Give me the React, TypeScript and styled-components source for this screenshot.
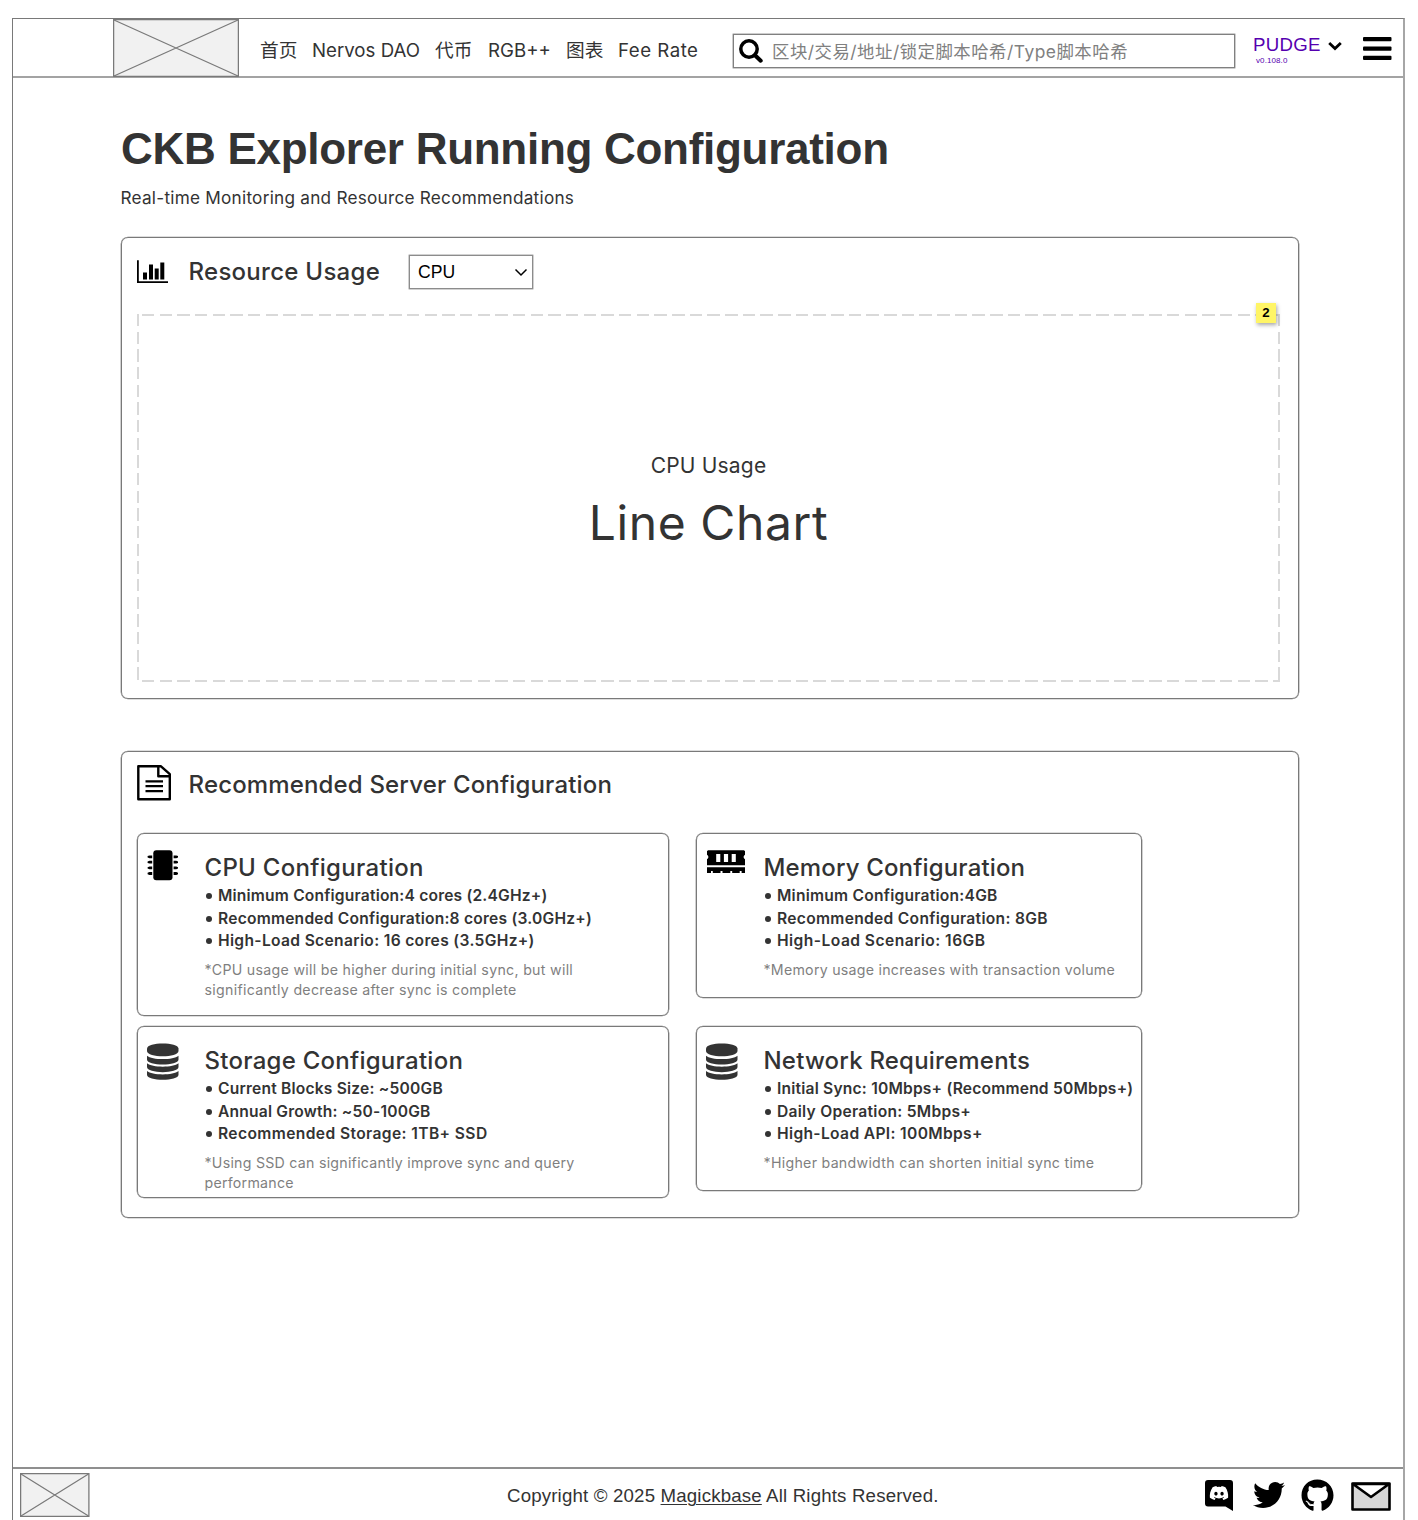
import React from "react";
import styled, { createGlobalStyle } from "styled-components";
import { FaTwitter, FaGithub, FaDiscord } from "react-icons/fa";

const ui = `Inter, "Noto Sans CJK SC", sans-serif`;
const arial = `"Liberation Sans", Arial, sans-serif`;
const line = "#797979";

const GlobalStyle = createGlobalStyle`
  *, *::before, *::after { box-sizing: border-box; }
  html, body { margin: 0; background: #fff; overflow: hidden; }
  body { font-family: ${ui}; color: #333; }
  h1, h2, h3, p, ul { margin: 0; padding: 0; }
  svg { display: block; flex: none; }
`;

const Frame = styled.div`
  display: flex;
  flex-direction: column;
  width: 1393px;
  height: 1502px;
  margin: 18px 0 0 12px;
  border: 1px solid ${line};
  border-right: 2px solid #a6a6a6;
  border-bottom: 0;
  overflow: hidden;
`;

const Header = styled.header`
  display: flex;
  flex: none;
  height: 59px;
  padding-left: 100px;
  border-bottom: 2px solid #a3a3a3;
`;

const Nav = styled.nav`
  display: grid;
  grid-template-columns: 52px 123px 53px 78px 52px 115px;
  align-items: center;
  margin-left: 21px;
  padding-top: 4px;
  font-size: 18.67px;
`;

const NavItem = styled.span<{ $cjk?: boolean; $track?: number }>`
  padding-top: ${(p) => (p.$cjk ? 0 : 2)}px;
  padding-bottom: ${(p) => (p.$cjk ? 2 : 0)}px;
  letter-spacing: ${(p) => p.$track ?? 0}px;
  white-space: nowrap;
`;

const SearchBox = styled.div`
  display: flex;
  align-items: center;
  width: 502px;
  height: 34px;
  margin-top: 15px;
  padding-left: 5px;
  border: 1px solid #808080;
  box-shadow: 0 0 0 0.4px #808080;
  color: #808080;
  gap: 9px;
`;

const SearchText = styled.span`
  padding-bottom: 2px;
  font-size: 17.4px;
  letter-spacing: 0.5px;
  white-space: nowrap;
`;

const Network = styled.div`
  width: 75px;
  padding-top: 15px;
  margin-left: 18px;
  font-family: ${arial};
  color: #5500b0;
`;

const NetworkName = styled.div`
  font-size: 18.67px;
  line-height: 22px;
  letter-spacing: 0.25px;
`;

const NetworkVersion = styled.div`
  padding-left: 3px;
  font-size: 8px;
  line-height: 9px;
  letter-spacing: 0.1px;
`;

const HeaderIcon = styled.span<{ $top: number; $left: number }>`
  margin: ${(p) => p.$top}px 0 0 ${(p) => p.$left}px;
`;

const Main = styled.main`
  flex: 1;
  padding: 45px 0 0 108px;
`;

const PageTitle = styled.h1`
  font: 700 44px/52px ${arial};
  letter-spacing: -0.28px;
  white-space: nowrap;
`;

const Subtitle = styled.p`
  margin: 10px 0 0 -0.5px;
  font-size: 17.2px;
  line-height: 26px;
  letter-spacing: 0.24px;
  white-space: nowrap;
`;

const Panel = styled.section<{ $height: number; $top: number }>`
  width: 1178px;
  height: ${(p) => p.$height}px;
  margin-top: ${(p) => p.$top}px;
  padding: 0 15px;
  border: 1px solid ${line};
  border-radius: 7px;
  box-shadow: 0 0 0 0.35px ${line};
`;

const PanelHead = styled.div<{ $height: number }>`
  display: flex;
  align-items: center;
  height: ${(p) => p.$height}px;
`;

const PanelTitle = styled.h2<{ $gap: number; $track: number }>`
  margin-left: ${(p) => p.$gap}px;
  font-size: 24px;
  font-weight: 500;
  line-height: 32px;
  letter-spacing: ${(p) => p.$track}px;
  white-space: nowrap;
`;

const Select = styled.div`
  display: flex;
  align-items: center;
  justify-content: space-between;
  width: 124px;
  height: 34px;
  margin: 1px 0 0 29px;
  padding: 0 4px 0 8px;
  border: 1px solid #8c8c8c;
  box-shadow: 0 0 0 0.4px #8c8c8c;
  font: 17.6px ${arial};
  color: #000;
`;

const dashX = "repeating-linear-gradient(90deg, #d9d9d9 0 12.4px, transparent 12.4px 17.67px)";
const dashY = "repeating-linear-gradient(180deg, #d9d9d9 0 12.4px, transparent 12.4px 17.67px)";

const ChartArea = styled.div`
  position: relative;
  display: flex;
  flex-direction: column;
  align-items: center;
  width: 1143px;
  height: 368px;
  margin-top: 9px;
  padding-top: 136px;
  background:
    ${dashX} 4.5px 0 / calc(100% - 5px) 2px no-repeat,
    ${dashX} 4.5px 100% / calc(100% - 5px) 2px no-repeat,
    ${dashY} 0 0 / 2px 100% no-repeat,
    ${dashY} 100% 0 / 2px 100% no-repeat;
`;

const ChartName = styled.div`
  font-size: 21px;
  line-height: 32px;
  letter-spacing: 0.2px;
`;

const ChartKind = styled.div`
  margin-top: 5px;
  font-size: 48px;
  line-height: 72px;
  letter-spacing: 0.6px;
`;

const NoteBadge = styled.span`
  position: absolute;
  top: -11px;
  right: 4px;
  width: 20px;
  height: 20px;
  background: #fff566;
  box-shadow: 1px 2px 4px rgba(0, 0, 0, 0.35);
  color: #000;
  font: 700 13.3px/19px ${arial};
  text-align: center;
`;

const CardGrid = styled.div`
  display: grid;
  grid-template-columns: 532px 446px;
  grid-template-rows: 193px 172px;
  column-gap: 27px;
  align-items: start;
  margin-top: 16px;
`;

const Card = styled.article<{ $height: number }>`
  display: grid;
  grid-template-columns: 57.5px 1fr;
  height: ${(p) => p.$height}px;
  padding: 16px 0 0 9px;
  border: 1px solid ${line};
  border-radius: 7px;
  box-shadow: 0 0 0 0.35px ${line};
`;

const CardTitle = styled.h3<{ $track: number }>`
  padding-top: 1px;
  font-size: 24px;
  font-weight: 500;
  line-height: 34px;
  letter-spacing: ${(p) => p.$track}px;
  white-space: nowrap;
`;

const Specs = styled.ul`
  list-style: none;
  font-size: 15.6px;
  font-weight: 600;
  line-height: 22.6px;
  white-space: nowrap;
`;

const Spec = styled.li<{ $track: number }>`
  display: flex;
  align-items: center;
  letter-spacing: ${(p) => p.$track}px;

  &::before {
    content: "";
    width: 6px;
    height: 6px;
    margin: 0 6.5px 0 1px;
    border-radius: 50%;
    background: #333;
  }
`;

const Footnote = styled.p<{ $track: number }>`
  width: 400px;
  margin-top: 7px;
  color: #7f7f7f;
  font-size: 14.2px;
  line-height: 20px;
  letter-spacing: ${(p) => p.$track}px;
  white-space: pre-line;
`;

const Footer = styled.footer`
  display: grid;
  grid-template-columns: 487px 1fr auto;
  flex: none;
  height: 53px;
  padding: 4px 12px 0 7px;
  border-top: 2px solid #8f8f8f;
`;

const Copyright = styled.p`
  padding-top: 11px;
  font: 18.67px/24px ${arial};
  letter-spacing: 0.17px;
  white-space: nowrap;
`;

const Link = styled.a`
  text-decoration: underline;
  text-underline-offset: 2px;
  text-decoration-thickness: 1px;
`;

const Socials = styled.div`
  display: flex;
  align-items: center;
  height: 44px;
  color: #000;
`;

const SocialSlot = styled.span<{ $left: number; $drop?: number }>`
  display: flex;
  margin-left: ${(p) => p.$left}px;
  padding-top: ${(p) => p.$drop ?? 0}px;
`;

function Placeholder({ width, height }: { width: number; height: number }) {
  return (
    <svg width={width} height={height}>
      <rect x=".6" y=".6" width={width - 1.2} height={height - 1.2} fill="#f1f1f1" stroke={line} strokeWidth="1.3" />
      <path d={`M1 1L${width - 1} ${height - 1}M1 ${height - 1}L${width - 1} 1`} stroke={line} strokeWidth="1.2" />
    </svg>
  );
}

const SearchIcon = () => (
  <svg width="24" height="24" viewBox="0 0 24 24" fill="none" stroke="#000">
    <circle cx="10" cy="10" r="8.2" strokeWidth="3.5" />
    <path d="M16 16.2L21.7 21.7" strokeWidth="4" strokeLinecap="round" />
  </svg>
);

const ChartIcon = () => (
  <svg width="32" height="24" viewBox="0 0 32 24" fill="#000">
    <path d="M0 .3h1.8v21H31V23.100H0zM6 12.500h4V19.500h-4zM12 4.500h4V19.500h-4zM17.700 8.500h4V19.500h-4zM23.300 2.400h4V19.500h-4z" />
  </svg>
);

const DocIcon = () => (
  <svg width="35" height="40" viewBox="0 0 35 40" fill="none" stroke="#000" strokeWidth="2.400" strokeLinejoin="round">
    <path d="M1.300 1.300H24L32.800 9.200V34.200H1.300z" />
    <path d="M21.300 1.300V11.300H32.800" />
    <path d="M8.500 16.300H26M8.500 21.200H26M8.500 26.200H26" strokeWidth="2.200" />
  </svg>
);

const CpuIcon = () => (
  <svg width="32" height="32" viewBox="0 1 32 32" fill="#000">
    <rect x="6.300" y="1.200" width="19.200" height="30" rx="3" />
    {[7.900, 13.300, 19, 24.600].map((y) => (
      <path
        key={y}
        d={`M5.200 ${y - 1.500}H2.500L0.600 ${y - 0.800}V${y + 0.600}L2.500 ${y + 1.300}H5.200zM26.600 ${y - 1.500}H29.300L31 ${y - 0.800}V${y + 0.600}L29.300 ${y + 1.300}H26.600z`}
      />
    ))}
  </svg>
);

const MemoryIcon = () => (
  <svg width="39" height="24" viewBox="-1 0 39 24" fill="#000">
    <path
      fillRule="evenodd"
      d="M1 .3H37L38 1.300V4.800A2.500 2.500 0 0 0 38 9.300V15.200H0V9.300A2.500 2.500 0 0 0 0 4.800V1.300zM9.200 4V12H13.300V4zM16.900 4V12H21.100V4zM24.700 4V12H28.800V4z"
    />
    <path d="M0 17.300H38V23H34.600V21H32.700V23H25.200V21H23.300V23H15.500V21H13.500V23H5.800V21H4V23H0z" />
  </svg>
);

const DatabaseIcon = () => (
  <svg width="31.500" height="38" viewBox="0 0 32 38" preserveAspectRatio="none" fill="#333">
    <path d="M0 5.500C0-1.300 32-1.300 32 5.500V8C32 15 0 15 0 8z" />
    {[12.700, 20.300, 28].map((y) => (
      <path key={y} d={`M0 ${y}C5 ${y + 4.500} 27 ${y + 4.500} 32 ${y}V${y + 3.800}C32 ${y + 10.500} 0 ${y + 10.500} 0 ${y + 3.800}z`} />
    ))}
  </svg>
);

const DiscordIcon = () => (
  <svg width="28" height="31" viewBox="0 0 28 31">
    <path d="M3 0H25A3 3 0 0 1 28 3V31L20.500 26.500H3A3 3 0 0 1 0 23.500V3A3 3 0 0 1 3 0z" fill="#000" />
    <FaDiscord x={4} y={3} size={20} color="#fff" />
  </svg>
);

const MailIcon = () => (
  <svg width="40" height="29" viewBox="0 0 40 29" stroke="#000" strokeWidth="2.600" strokeLinejoin="round">
    <rect x="1.500" y="1.500" width="37" height="26" fill="#d7d7d7" />
    <path d="M2 2L20 15L38 2z" fill="#fff" />
  </svg>
);

interface CardData {
  title: string;
  track: number;
  height: number;
  icon: React.ReactNode;
  specs: [text: string, track: number][];
  note: string;
  noteTrack: number;
}

const cards: CardData[] = [
  {
    title: "CPU Configuration",
    track: 0.3,
    height: 183,
    icon: <CpuIcon />,
    specs: [
      ["Minimum Configuration:4 cores (2.4GHz+)", 0.19],
      ["Recommended Configuration:8 cores (3.0GHz+)", 0.22],
      ["High-Load Scenario: 16 cores (3.5GHz+)", 0.33],
    ],
    note: "*CPU usage will be higher during initial sync, but will\nsignificantly decrease after sync is complete",
    noteTrack: 0.29,
  },
  {
    title: "Memory Configuration",
    track: 0.15,
    height: 165,
    icon: <MemoryIcon />,
    specs: [
      ["Minimum Configuration:4GB", 0.24],
      ["Recommended Configuration: 8GB", 0.3],
      ["High-Load Scenario: 16GB", 0.45],
    ],
    note: "*Memory usage increases with transaction volume",
    noteTrack: 0.25,
  },
  {
    title: "Storage Configuration",
    track: 0.26,
    height: 172,
    icon: <DatabaseIcon />,
    specs: [
      ["Current Blocks Size: ~500GB", 0.2],
      ["Annual Growth: ~50-100GB", 0.2],
      ["Recommended Storage: 1TB+ SSD", 0.39],
    ],
    note: "*Using SSD can significantly improve sync and query\nperformance",
    noteTrack: 0.25,
  },
  {
    title: "Network Requirements",
    track: 0.2,
    height: 165,
    icon: <DatabaseIcon />,
    specs: [
      ["Initial Sync: 10Mbps+ (Recommend 50Mbps+)", 0.2],
      ["Daily Operation: 5Mbps+", 0.27],
      ["High-Load API: 100Mbps+", 0.34],
    ],
    note: "*Higher bandwidth can shorten initial sync time",
    noteTrack: 0.28,
  },
];

export default function App() {
  return (
    <>
      <GlobalStyle />
      <Frame>
        <Header>
          <Placeholder width={126} height={58} />
          <Nav>
            <NavItem $cjk>首页</NavItem>
            <NavItem>Nervos DAO</NavItem>
            <NavItem $cjk>代币</NavItem>
            <NavItem>RGB++</NavItem>
            <NavItem $cjk>图表</NavItem>
            <NavItem $track={0.5}>Fee Rate</NavItem>
          </Nav>
          <SearchBox>
            <SearchIcon />
            <SearchText>区块/交易/地址/锁定脚本哈希/Type脚本哈希</SearchText>
          </SearchBox>
          <Network>
            <NetworkName>PUDGE</NetworkName>
            <NetworkVersion>v0.108.0</NetworkVersion>
          </Network>
          <HeaderIcon $top={22} $left={0}>
            <svg width="14" height="10" viewBox="0 0 14 10" fill="none" stroke="#000" strokeWidth="2.800">
              <path d="M1.200 2L7 7.500L12.800 2" />
            </svg>
          </HeaderIcon>
          <HeaderIcon $top={18} $left={20.5}>
            <svg width="29" height="24" viewBox="0 0 29 24" fill="#000">
              <rect width="28.500" height="4.300" rx="1" />
              <rect y="9.500" width="28.500" height="4.300" rx="1" />
              <rect y="18.700" width="28.500" height="4.300" rx="1" />
            </svg>
          </HeaderIcon>
        </Header>
        <Main>
          <PageTitle>CKB Explorer Running Configuration</PageTitle>
          <Subtitle>Real-time Monitoring and Resource Recommendations</Subtitle>
          <Panel $height={462} $top={26}>
            <PanelHead $height={67}>
              <ChartIcon />
              <PanelTitle $gap={19.5} $track={0.28}>
                Resource Usage
              </PanelTitle>
              <Select>
                CPU
                <svg width="14" height="9" viewBox="0 0 14 9" fill="none" stroke="#000" strokeWidth="1.500">
                  <path d="M1.500 1.500L7 7L12.500 1.500" />
                </svg>
              </Select>
            </PanelHead>
            <ChartArea>
              <ChartName>CPU Usage</ChartName>
              <ChartKind>Line Chart</ChartKind>
              <NoteBadge>2</NoteBadge>
            </ChartArea>
          </Panel>
          <Panel $height={467} $top={52}>
            <PanelHead $height={65}>
              <DocIcon />
              <PanelTitle $gap={16.5} $track={0.16}>
                Recommended Server Configuration
              </PanelTitle>
            </PanelHead>
            <CardGrid>
              {cards.map((card) => (
                <Card key={card.title} $height={card.height}>
                  {card.icon}
                  <div>
                    <CardTitle $track={card.track}>{card.title}</CardTitle>
                    <Specs>
                      {card.specs.map(([text, track]) => (
                        <Spec key={text} $track={track}>
                          {text}
                        </Spec>
                      ))}
                    </Specs>
                    <Footnote $track={card.noteTrack}>{card.note}</Footnote>
                  </div>
                </Card>
              ))}
            </CardGrid>
          </Panel>
        </Main>
        <Footer>
          <Placeholder width={69.5} height={44} />
          <Copyright>
            Copyright © 2025 <Link>Magickbase</Link> All Rights Reserved.
          </Copyright>
          <Socials>
            <SocialSlot $left={0}>
              <DiscordIcon />
            </SocialSlot>
            <SocialSlot $left={19.5}>
              <FaTwitter size={32} />
            </SocialSlot>
            <SocialSlot $left={16.5}>
              <FaGithub size={33} />
            </SocialSlot>
            <SocialSlot $left={17} $drop={2}>
              <MailIcon />
            </SocialSlot>
          </Socials>
        </Footer>
      </Frame>
    </>
  );
}
